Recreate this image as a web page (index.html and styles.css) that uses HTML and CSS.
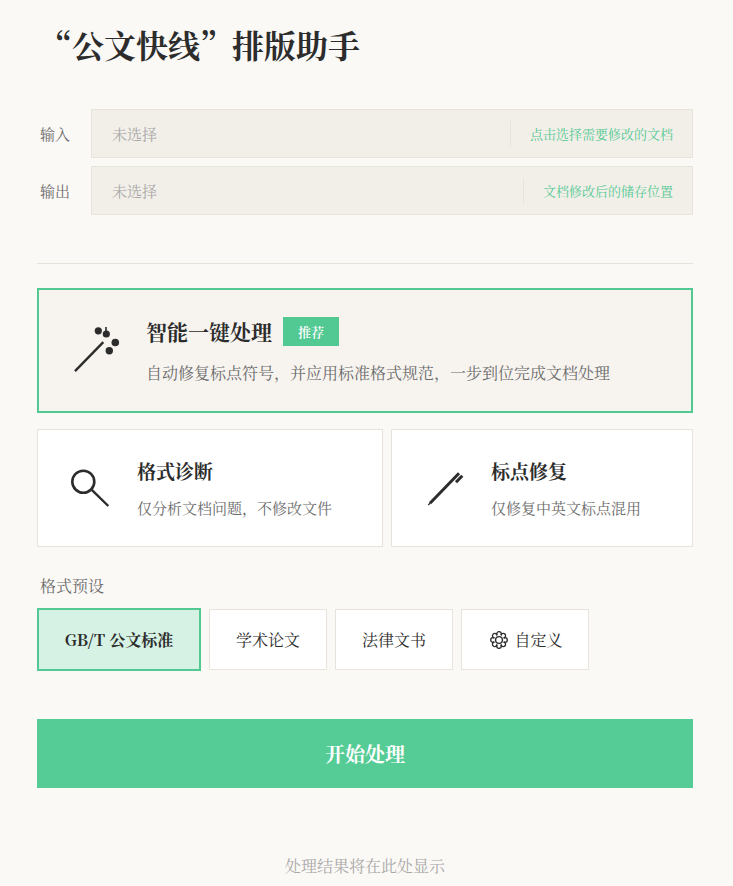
FILE: index.html
```html
<!DOCTYPE html>
<html lang="zh-CN">
<head>
<meta charset="utf-8">
<title>公文快线</title>
<link rel="stylesheet" href="styles.css">
</head>
<body>
<main class="page">
  <h1 class="title">“公文快线”排版助手</h1>

  <section class="files">
    <div class="file-row">
      <span class="file-label">输入</span>
      <div class="file-field">
        <span class="file-value">未选择</span>
        <span class="file-action">点击选择需要修改的文档</span>
      </div>
    </div>
    <div class="file-row">
      <span class="file-label">输出</span>
      <div class="file-field">
        <span class="file-value">未选择</span>
        <span class="file-action">文档修改后的储存位置</span>
      </div>
    </div>
  </section>

  <hr class="divider">

  <section class="hero-card">
    <svg class="hero-icon" width="48" height="48" viewBox="0 0 48 48" fill="#2c2c2c" stroke="none">
      <path d="M2 44.200 L30.300 15.200" stroke="#2c2c2c" stroke-width="2.400" fill="none"/>
      <circle cx="25.300" cy="3.800" r="3.600"/>
      <circle cx="33.300" cy="7" r="3.600"/>
      <path d="M33 0 V6" stroke="#2c2c2c" stroke-width="1.600"/>
      <circle cx="42.300" cy="15.500" r="3.800"/>
      <circle cx="36.300" cy="23.800" r="3.700"/>
    </svg>
    <div class="hero-text">
      <div class="hero-heading">
        <h2 class="hero-title">智能一键处理</h2>
        <span class="badge">推荐</span>
      </div>
      <p class="hero-desc">自动修复标点符号，并应用标准格式规范，一步到位完成文档处理</p>
    </div>
  </section>

  <section class="tools">
    <div class="tool-card">
      <svg class="tool-icon" width="40" height="40" viewBox="0 0 40 40" fill="none" stroke="#2c2c2c">
        <circle cx="13.300" cy="13.700" r="11" stroke-width="2.600"/>
        <path d="M21.800 21.800 L38.300 38" stroke-width="2.400"/>
      </svg>
      <div>
        <h3 class="tool-title">格式诊断</h3>
        <p class="tool-desc">仅分析文档问题，不修改文件</p>
      </div>
    </div>
    <div class="tool-card">
      <svg class="tool-icon" width="40" height="40" viewBox="0 0 40 40" fill="none" stroke="#2c2c2c">
        <path d="M6 35.300 L35 5.300" stroke-width="3"/>
        <path d="M4.300 37 L6 35.300" stroke-width="1.400"/>
        <path d="M38.300 7.700 L32 14.300" stroke-width="3"/>
      </svg>
      <div>
        <h3 class="tool-title">标点修复</h3>
        <p class="tool-desc">仅修复中英文标点混用</p>
      </div>
    </div>
  </section>

  <div class="preset-label">格式预设</div>
  <section class="presets">
    <button class="preset preset-active">GB/T 公文标准</button>
    <button class="preset preset-std">学术论文</button>
    <button class="preset preset-std">法律文书</button>
    <button class="preset preset-custom">
      <svg width="18" height="18" viewBox="0 0 18 18" fill="none" stroke="#2c2c2c" stroke-width="1.300">
        <circle cx="9" cy="3" r="2.300"/>
        <circle cx="9" cy="15" r="2.300"/>
        <circle cx="3" cy="9" r="2.300"/>
        <circle cx="15" cy="9" r="2.300"/>
        <circle cx="4.760" cy="4.760" r="2.300"/>
        <circle cx="13.240" cy="4.760" r="2.300"/>
        <circle cx="4.760" cy="13.240" r="2.300"/>
        <circle cx="13.240" cy="13.240" r="2.300"/>
        <circle class="flower-mask" cx="9" cy="9" r="5"/>
        <circle cx="9" cy="9" r="3.400" stroke-width="1.400"/>
      </svg>
      <span>自定义</span>
    </button>
  </section>

  <button class="start">开始处理</button>

  <p class="result">处理结果将在此处显示</p>
</main>
</body>
</html>
```
FILE: styles.css
```css
* { box-sizing: border-box; }
html, body { margin: 0; padding: 0; height: 886px; overflow: hidden; }
body {
  background: #fbf9f6;
  color: #2c2c2c;
  font-family: "Noto Serif CJK SC", "Source Han Serif SC", "Liberation Serif", "Noto Sans CJK SC", serif;
}
.page { width: 656px; margin-left: 37px; display: flex; flex-direction: column; }
.title {
  margin: 23px 0 0 3px;
  font-size: 32px;
  line-height: 42px;
  font-weight: 700;
}
.files { margin-top: 44px; display: flex; flex-direction: column; gap: 8px; }
.file-row { display: flex; align-items: center; }
.file-label { width: 54px; padding-left: 3px; font-size: 15px; color: #6b6b6b; }
.file-field {
  flex: 1;
  height: 49px;
  display: flex;
  align-items: center;
  background: #f2efe9;
  border: 1px solid #e8e4dc;
  padding: 0 19px 0 20px;
}
.file-value { flex: 1; font-size: 15px; color: #a8a8a8; }
.file-action {
  border-left: 1px solid #e8e4dc;
  padding-left: 19px;
  height: 26px;
  line-height: 26px;
  font-size: 13px;
  color: #52c993;
}
.divider { width: 100%; height: 1px; margin: 48px 0 24px; border: 0; background: #e8e4dc; }
.hero-card {
  height: 125px;
  display: flex;
  align-items: center;
  gap: 25px;
  padding-left: 34px;
  background: #f7f4f0;
  border: 2px solid #52c993;
}
.hero-icon { flex: none; }
.hero-heading { display: flex; align-items: center; gap: 11px; }
.hero-title { margin: 0; font-size: 21px; line-height: 30px; font-weight: 700; }
.badge {
  width: 56px;
  height: 29px;
  line-height: 29px;
  text-align: center;
  background: #52c993;
  color: #fff;
  font-size: 13px;
  font-weight: 600;
}
.hero-desc { margin: 15px 0 0; font-size: 16px; line-height: 24px; color: #6b6b6b; }
.tools { margin-top: 16px; display: grid; grid-template-columns: 346px 1fr; gap: 8px; }
.tool-card {
  height: 118px;
  display: flex;
  align-items: center;
  gap: 27px;
  padding-left: 32px;
  background: #fff;
  border: 1px solid #e8e4dc;
}
.tool-icon { flex: none; }
.tool-title { margin: 0; font-size: 19px; line-height: 28px; font-weight: 700; }
.tool-desc { margin: 12px 0 0; font-size: 15px; line-height: 22px; color: #6b6b6b; }
.preset-label { margin: 28px 0 0 3px; font-size: 16px; line-height: 22px; color: #6b6b6b; }
.presets { margin-top: 11px; display: flex; gap: 8px; align-items: center; }
.preset {
  height: 61px;
  padding: 0;
  display: flex;
  align-items: center;
  justify-content: center;
  gap: 6px;
  background: #fff;
  border: 1px solid #e8e4dc;
  color: #2c2c2c;
  font-family: inherit;
  font-size: 16px;
}
.preset-active { width: 164px; height: 63px; background: #d6f2e4; border: 2px solid #52c993; font-weight: 700; }
.preset-std { width: 118px; }
.preset-custom { width: 128px; padding-left: 3px; }
.flower-mask { fill: #fff; stroke: none; }
.start {
  margin-top: 48px;
  height: 69px;
  background: #55cb95;
  border: 0;
  color: #fff;
  font-family: inherit;
  font-size: 20px;
  font-weight: 700;
}
.result { margin: 66px 0 0; text-align: center; font-size: 16px; line-height: 24px; color: #a8a8a8; }
```
